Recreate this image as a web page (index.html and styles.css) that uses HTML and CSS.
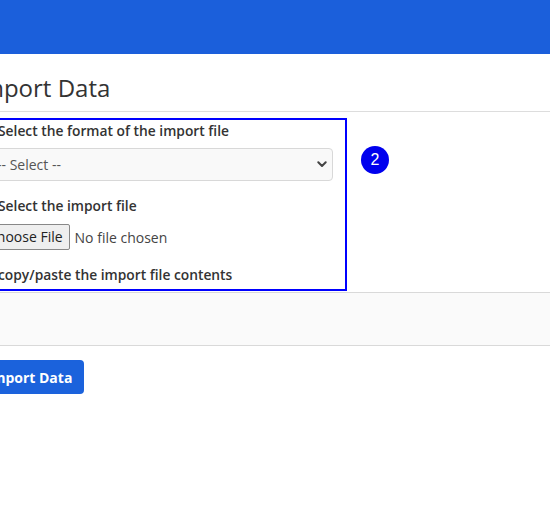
FILE: index.html
```html
<!DOCTYPE html>
<html>
<head>
<meta charset="utf-8">
<link rel="stylesheet" href="styles.css">
</head>
<body>
<header class="topbar"></header>
<main class="page">
  <h1 class="title">Import Data</h1>
  <div class="row">
    <div class="form-box">
      <label class="lbl lbl-first">Select the format of the import file</label>
      <div class="select-wrap">
        <select class="sel"><option>-- Select --</option></select>
        <svg class="chev" width="10" height="7" viewBox="0 0 10 7"><path d="M1.3 1.3 L5 5 L8.7 1.3" fill="none" stroke="#444" stroke-width="2" stroke-linecap="round" stroke-linejoin="round"/></svg>
      </div>
      <label class="lbl lbl-next">Select the import file</label>
      <div class="file-row">
        <span class="file-btn">Choose File</span>
        <span class="file-text">No file chosen</span>
      </div>
      <label class="lbl lbl-next">copy/paste the import file contents</label>
    </div>
    <div class="badge">2</div>
  </div>
  <div class="paste-area"></div>
  <button class="btn">Import Data</button>
</main>
</body>
</html>
```
FILE: styles.css
```css
html, body {
  margin: 0;
  padding: 0;
  background: #fff;
  font-family: "Open Sans", "Liberation Sans", sans-serif;
  color: #333;
}
.topbar {
  height: 54px;
  background: #1b5fdb;
}
.page {
  margin-left: -25px;
}
.title {
  margin: 0;
  padding: 17px 0 6px 0;
  font-size: 24px;
  font-weight: 400;
  line-height: 34px;
  color: #333;
  border-bottom: 1px solid #ddd;
}
.row {
  display: flex;
  align-items: flex-start;
  margin-top: 6px;
}
.form-box {
  width: 347px;
  border: 2px solid #0000ff;
  padding: 1px 12px 4px 9px;
  display: flex;
  flex-direction: column;
}
.lbl {
  display: block;
  font-size: 13.8px;
  font-weight: 600;
  line-height: 20px;
  color: #333;
  padding-left: 12px;
}
.lbl-first { margin-bottom: 7px; }
.lbl-next { margin-top: 15px; margin-bottom: 8px; }
.lbl-next:last-child { margin-top: 15px; margin-bottom: 0; }
.select-wrap {
  position: relative;
}
.sel {
  appearance: none;
  -webkit-appearance: none;
  width: 100%;
  height: 33px;
  box-sizing: border-box;
  border: 1px solid #d8d8d8;
  border-radius: 4px;
  background: #f9f9f9;
  font-family: "Open Sans", sans-serif;
  font-size: 14px;
  color: #555;
  padding: 0 30px 0 10px;
}
.chev {
  position: absolute;
  right: 6px;
  top: 13px;
}
.file-row {
  display: flex;
  align-items: center;
  height: 26px;
}
.file-btn {
  box-sizing: border-box;
  height: 26px;
  line-height: 24px;
  padding: 0 6px;
  border: 1px solid #888;
  border-radius: 2px;
  background: #efefef;
  font-size: 14px;
  color: #222;
  margin-left: -5px;
}
.file-text {
  margin-left: 5px;
  font-size: 14px;
  color: #444;
}
.badge {
  margin-left: 14px;
  margin-top: 28px;
  width: 28px;
  height: 28px;
  border-radius: 50%;
  background: #0000ee;
  color: #fff;
  font-family: "Liberation Sans", Arial, sans-serif;
  font-size: 16px;
  line-height: 28px;
  text-align: center;
}
.paste-area {
  margin-top: 1px;
  height: 52px;
  background: #fafafa;
  border-top: 1px solid #d9d9d9;
  border-bottom: 1px solid #d9d9d9;
}
.btn {
  margin-top: 14px;
  height: 34px;
  padding: 0 12px;
  border: none;
  border-radius: 4px;
  background: #1b62dc;
  color: #fff;
  font-family: "Open Sans", sans-serif;
  font-size: 14px;
  font-weight: 700;
}
```
